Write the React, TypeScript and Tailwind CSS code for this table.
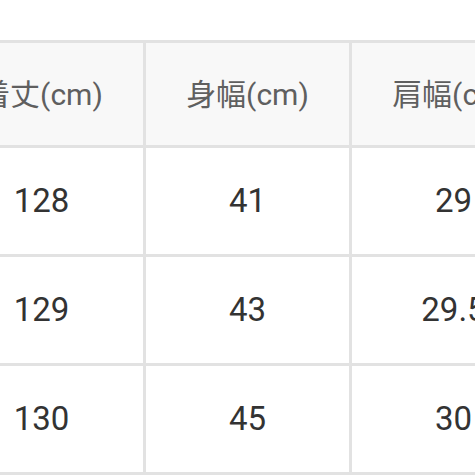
import React from "react";

const headers = ["着丈(cm)", "身幅(cm)", "肩幅(cm)"];
const rows = [
  ["128", "41", "29"],
  ["129", "43", "29.5"],
  ["130", "45", "30"],
];

export default function App() {
  return (
    <div
      className="w-[475px] h-[475px] overflow-hidden bg-white relative"
      style={{ fontFamily: 'Roboto, "Noto Sans CJK JP", sans-serif' }}
    >
      <div className="ml-[-63px] mt-[40px] w-[621px] grid grid-cols-[203px_203px_203px] grid-rows-[102px_106px_106px_106px] gap-[3px] p-[3px] bg-[#e2e2e2]">
        {headers.map((h) => (
          <div
            key={h}
            className="bg-[#f8f8f8] flex items-center justify-center text-[30px] text-[#5f5f5f]"
          >
            {h}
          </div>
        ))}
        {rows.map((r, i) =>
          r.map((c, j) => (
            <div
              key={`${i}-${j}`}
              className="bg-white flex items-center justify-center text-[33px] text-[#333333]"
            >
              {c}
            </div>
          ))
        )}
      </div>
    </div>
  );
}
